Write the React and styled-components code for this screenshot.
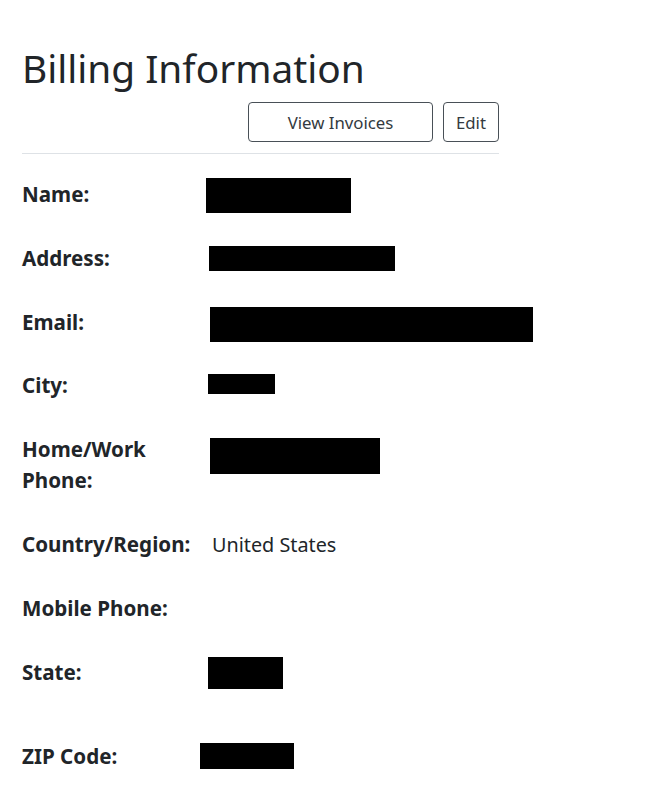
import React from "react";
import styled, { createGlobalStyle } from "styled-components";

const GlobalStyle = createGlobalStyle`
    body {
        margin: 0;
        background: #fff;
        color: #212529;
        font-family: "Noto Sans", "DejaVu Sans", sans-serif;
    }
`

const Page = styled.main`
    width: 477px;
    padding: 40px 0 0 22px;
`
const Title = styled.h1`
    margin: 0;
    font-size: 38.8px;
    font-weight: 400;
    line-height: 56px;
`
const Actions = styled.div`
    display: flex;
    justify-content: flex-end;
    gap: 10px;
    padding-top: 6px;
    padding-bottom: 11px;
    border-bottom: 1px solid #dee2e6;
`
const Button = styled.button`
    width: ${p => p.$width}px;
    height: 40px;
    padding: 0;
    background: #fff;
    color: #343a40;
    border: 1px solid #495057;
    border-radius: 4px;
    font-family: inherit;
    font-size: 16.8px;
`
const Details = styled.dl`
    display: grid;
    grid-template-columns: 186px 1fr;
    margin: 25px 0 0;
`
const Label = styled.dt`
    font-size: 20.6px;
    font-weight: 700;
    line-height: 31px;
    margin-bottom: ${p => p.$gap || 32.8}px;
    padding-right: 12px;
`
const Value = styled.dd`
    margin: 0;
    line-height: 31px;
`
const Redacted = styled.span`
    display: block;
    background: #000;
    width: ${p => p.$w}px;
    height: ${p => p.$h}px;
    margin-left: ${p => p.$x}px;
    margin-top: ${p => p.$y}px;
`
const Plain = styled.span`
    display: block;
    padding-left: 4px;
    font-size: 19.8px;
`

const rows = [
    { label: "Name:", box: { x: -2, y: -1, w: 145, h: 35 } },
    { label: "Address:", box: { x: 1, y: 3, w: 186, h: 25 } },
    { label: "Email:", box: { x: 2, y: 0, w: 323, h: 35 } },
    { label: "City:", box: { x: 0, y: 4, w: 67, h: 20 } },
    { label: "Home/Work Phone:", box: { x: 2, y: 4, w: 170, h: 36 } },
    { label: "Country/Region:", text: "United States" },
    { label: "Mobile Phone:" },
    { label: "State:", box: { x: 0, y: 0, w: 75, h: 32 }, gap: 53 },
    { label: "ZIP Code:", box: { x: -8, y: 2, w: 94, h: 26 } },
]

export default function App() {
    return (
        <Page>
            <GlobalStyle />
            <Title>Billing Information</Title>
            <Actions>
                <Button $width={185}>View Invoices</Button>
                <Button $width={56}>Edit</Button>
            </Actions>
            <Details>
                {rows.map(r => (
                    <React.Fragment key={r.label}>
                        <Label $gap={r.gap}>{r.label}</Label>
                        <Value>
                            {r.box && <Redacted $x={r.box.x} $y={r.box.y} $w={r.box.w} $h={r.box.h} />}
                            {r.text && <Plain>{r.text}</Plain>}
                        </Value>
                    </React.Fragment>
                ))}
            </Details>
        </Page>
    )
}
